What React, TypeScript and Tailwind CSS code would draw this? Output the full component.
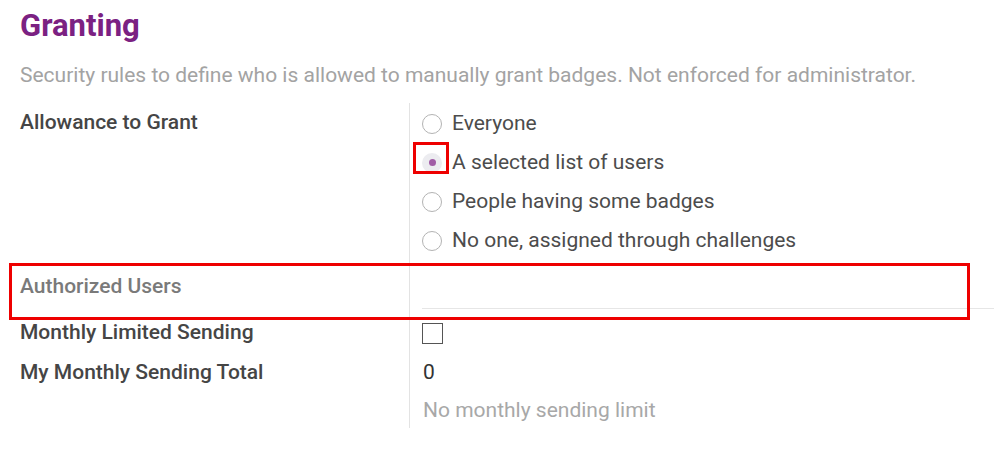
import React from "react";

const font = { fontFamily: "Roboto, 'Liberation Sans', sans-serif" };

function Radio({ checked }: { checked?: boolean }) {
  if (checked) {
    return (
      <span className="flex h-[20px] w-[20px] items-center justify-center rounded-full bg-[#ececf0] shrink-0">
        <span className="h-[7px] w-[7px] rounded-full bg-[#a15ca6]" />
      </span>
    );
  }
  return <span className="h-[20px] w-[20px] rounded-full border border-[#b3b3b3] bg-white shrink-0" />;
}

export default function App() {
  const options = [
    { label: "Everyone" },
    { label: "A selected list of users", checked: true },
    { label: "People having some badges" },
    { label: "No one, assigned through challenges" },
  ];
  return (
    <div className="relative w-[994px] h-[468px] bg-white overflow-hidden" style={font}>
      <div className="pl-5 pt-[6px]">
        <h2 className="text-[31px] leading-[40px] font-bold text-[#7b2182]">Granting</h2>
        <p className="mt-[16px] text-[21px] leading-[26px] text-[#a3a3a3]">
          Security rules to define who is allowed to manually grant badges. Not enforced for administrator.
        </p>
      </div>
      <div className="mt-[15px] grid grid-cols-[409px_1fr]">
        {/* Allowance */}
        <div className="pl-5 h-[157px]">
          <div className="h-[39px] flex items-center text-[21px] font-medium text-[#454545]">Allowance to Grant</div>
        </div>
        <div className="border-l border-[#e3e3e3] pl-[12px] pt-[1px] flex flex-col">
          {options.map((o) => (
            <div key={o.label} className="h-[39px] flex items-center gap-[10px] text-[21px] text-[#4c4c4c]">
              <Radio checked={o.checked} />
              <span>{o.label}</span>
            </div>
          ))}
        </div>
        {/* Authorized users */}
        <div className="pl-5 h-[53px] pt-[7px]">
          <div className="h-[39px] flex items-center text-[21px] font-medium text-[#7a7a7a]">Authorized Users</div>
        </div>
        <div className="border-l border-[#e3e3e3] pl-[12px] flex flex-col">
          <div className="h-[49px] border-b border-[#e6e6e6]" />
        </div>
        {/* Monthly limited */}
        <div className="pl-5 h-[40px] flex items-center text-[21px] font-medium text-[#454545]">Monthly Limited Sending</div>
        <div className="border-l border-[#e3e3e3] pl-[12px] flex items-center">
          <span className="h-[21px] w-[21px] border-[1.5px] border-[#555] bg-white" />
        </div>
        {/* My monthly */}
        <div className="pl-5">
          <div className="h-[40px] flex items-center text-[21px] font-medium text-[#454545]">My Monthly Sending Total</div>
        </div>
        <div className="border-l border-[#e3e3e3] pl-[13px]">
          <div className="h-[40px] flex items-center text-[21px] text-[#333]">0</div>
          <div className="h-[35px] flex items-center text-[21px] text-[#a8a8a8]">No monthly sending limit</div>
        </div>
      </div>
      {/* annotation highlights */}
      <div className="absolute left-[413px] top-[142px] w-[36px] h-[32px] border-[3px] border-[#ee0000]" />
      <div className="absolute left-[9px] top-[263px] w-[961px] h-[57px] border-[3px] border-[#ee0000]" />
    </div>
  );
}
